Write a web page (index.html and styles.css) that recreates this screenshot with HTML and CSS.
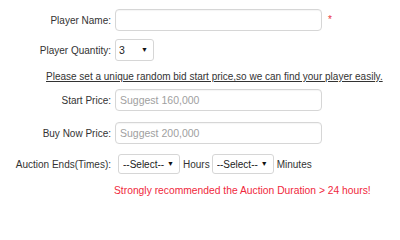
FILE: index.html
```html
<!DOCTYPE html>
<html>
<head>
<meta charset="utf-8">
<link rel="stylesheet" href="styles.css">
</head>
<body>
<form class="form">
  <div class="row row-name">
    <label class="label">Player Name:</label>
    <div class="field">
      <input class="text-input" type="text">
      <span class="req">*</span>
    </div>
  </div>
  <div class="row row-qty">
    <label class="label">Player Quantity:</label>
    <div class="field">
      <span class="sel sel-qty"><select><option>3</option></select></span>
    </div>
  </div>
  <div class="notice">Please set a unique random bid start price,so we can find your player easily.</div>
  <div class="row row-start">
    <label class="label">Start Price:</label>
    <div class="field">
      <input class="text-input" type="text" placeholder="Suggest 160,000">
    </div>
  </div>
  <div class="row row-buy">
    <label class="label">Buy Now Price:</label>
    <div class="field">
      <input class="text-input" type="text" placeholder="Suggest 200,000">
    </div>
  </div>
  <div class="row row-ends">
    <label class="label">Auction Ends(Times):</label>
    <div class="field field-ends">
      <span class="sel sel-time"><select><option>--Select--</option></select></span>
      <span class="unit">Hours</span>
      <span class="sel sel-time"><select><option>--Select--</option></select></span>
      <span class="unit">Minutes</span>
    </div>
  </div>
  <div class="warn">Strongly recommended the Auction Duration &gt; 24 hours!</div>
</form>
</body>
</html>
```
FILE: styles.css
```css
html, body {
  margin: 0;
  padding: 0;
  background: #fff;
}
body {
  font-family: "Liberation Sans", Arial, sans-serif;
  font-size: 10px;
  color: #333;
  width: 400px;
  height: 202px;
  overflow: hidden;
}
.form {
  display: flex;
  flex-direction: column;
  padding-top: 9px;
}
.row {
  display: flex;
  align-items: center;
}
.label {
  width: 111px;
  text-align: right;
  flex: none;
}
.field {
  margin-left: 4px;
  display: flex;
  align-items: center;
}
.text-input {
  box-sizing: border-box;
  width: 207px;
  height: 22px;
  border: 1px solid #d6d6d6;
  border-radius: 4px;
  padding: 0 4px;
  font-family: inherit;
  font-size: 10.5px;
  color: #333;
  box-shadow: inset 0 1px 1px rgba(0,0,0,0.04);
  outline: none;
}
.text-input::placeholder {
  color: #a0a0a0;
}
.req {
  color: #e8323c;
  margin-left: 6px;
  font-size: 10px;
  line-height: 1;
}
.row-qty {
  margin-top: 8px;
}
.sel {
  position: relative;
  display: inline-block;
}
.sel select {
  -webkit-appearance: none;
  appearance: none;
  box-sizing: border-box;
  height: 22px;
  border: 1px solid #d6d6d6;
  border-radius: 3px;
  background: #fff;
  font-family: inherit;
  font-size: 10.5px;
  color: #222;
  padding: 0 3px;
  outline: none;
}
.sel::after {
  content: "\25BC";
  position: absolute;
  right: 6px;
  top: 7px;
  font-size: 7px;
  color: #111;
  pointer-events: none;
}
.sel-qty select {
  width: 39px;
}
.notice {
  margin-top: 9px;
  padding-left: 46px;
  text-decoration: underline;
  color: #333;
  height: 13px;
  line-height: 13px;
}
.row-start {
  margin-top: 6px;
}
.row-buy {
  margin-top: 11px;
}
.row-ends {
  margin-top: 10px;
}
.field-ends {
  margin-left: 7px;
}
.sel-time select {
  width: 62px;
  height: 20px;
  font-size: 10px;
  padding: 0 4px;
}
.sel-time::after {
  top: 6px;
  right: 6px;
}
.unit {
  margin: 0 2px 0 3px;
}
.warn {
  margin-top: 11px;
  padding-left: 114px;
  font-size: 10.3px;
  color: #f0283c;
}
```
